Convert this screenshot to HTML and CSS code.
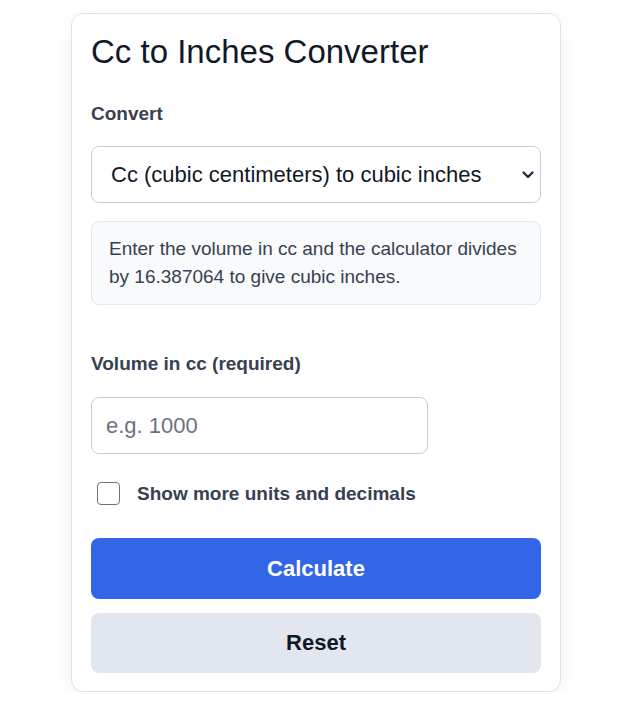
FILE: index.html
```html
<!DOCTYPE html>
<html lang="en">
<head>
    <meta charset="UTF-8">
    <meta name="viewport" content="width=device-width, initial-scale=1.0">
    <title>Cc to Inches Converter</title>
    <link rel="stylesheet" href="styles.css">
</head>
<body>
    <div class="calc-card">
        <h1 class="calc-title">Cc to Inches Converter</h1>

        <form class="calc-form">
            <div class="field">
                <label class="field-label" for="mode">Convert</label>
                <select id="mode" class="select-field">
                    <option>Cc (cubic centimeters) to cubic inches</option>
                    <option>Cubic inches to cc (cubic centimeters)</option>
                </select>
            </div>

            <div class="info-box">
                Enter the volume in cc and the calculator divides by 16.387064 to give cubic inches.
            </div>

            <div class="field field-volume">
                <label class="field-label" for="volume">Volume in cc (required)</label>
                <input type="text" id="volume" class="input-field" placeholder="e.g. 1000">
            </div>

            <label class="check-row">
                <input type="checkbox" class="check-box">
                <span>Show more units and decimals</span>
            </label>

            <button type="button" class="btn btn-primary">Calculate</button>
            <button type="reset" class="btn btn-secondary">Reset</button>
        </form>
    </div>
</body>
</html>
```

FILE: styles.css
```css
* {
    margin: 0;
    padding: 0;
    box-sizing: border-box;
}

body {
    font-family: 'Liberation Sans', Arial, sans-serif;
    background: #ffffff;
    color: #111827;
}

.calc-card {
    width: 490px;
    margin: 13px 0 0 71px;
    padding: 18px 19px 18px;
    background: #ffffff;
    border: 1px solid #dbe3ee;
    border-radius: 12px;
    box-shadow: 0 6px 24px rgba(15, 23, 42, 0.05);
}

.calc-title {
    font-size: 33px;
    font-weight: 400;
    line-height: 40px;
    color: #111827;
    margin-bottom: 31px;
}

.calc-form {
    display: flex;
    flex-direction: column;
}

.field-label {
    display: block;
    font-size: 19px;
    font-weight: 700;
    color: #374151;
    line-height: 22px;
    margin-bottom: 21px;
}

/* custom chevron instead of the native arrow */
.select-field {
    appearance: none;
    width: 100%;
    height: 57px;
    padding: 0 30px 0 19px;
    font-family: inherit;
    font-size: 22px;
    color: #111827;
    background: #ffffff url("data:image/svg+xml,%3Csvg xmlns='http://www.w3.org/2000/svg' width='12' height='8' viewBox='0 0 12 8'%3E%3Cpath d='M1.5 1.5 6 6l4.5-4.5' fill='none' stroke='%231f2937' stroke-width='2.2' stroke-linecap='round' stroke-linejoin='round'/%3E%3C/svg%3E") no-repeat right 6px center;
    border: 1px solid #c3cedb;
    border-radius: 8px;
}

.info-box {
    margin-top: 18px;
    padding: 13px 17px;
    background: #f8fafc;
    border: 1px solid #e2e8f0;
    border-radius: 8px;
    font-size: 19px;
    line-height: 28px;
    color: #374151;
}

.field-volume {
    margin-top: 48px;
}

.field-volume .field-label {
    margin-bottom: 22px;
}

.input-field {
    width: 337px;
    height: 57px;
    padding: 0 14px;
    font-family: inherit;
    font-size: 22px;
    color: #111827;
    border: 1px solid #c3cedb;
    border-radius: 8px;
}

.input-field::placeholder {
    color: #6b7280;
}

.check-row {
    display: flex;
    align-items: center;
    gap: 17px;
    margin: 28px 0 0 6px;
    font-size: 19px;
    font-weight: 700;
    color: #374151;
}

.check-box {
    appearance: none;
    width: 23px;
    height: 23px;
    border: 1.5px solid #6b7280;
    border-radius: 4px;
    background: #ffffff;
}

.btn {
    width: 100%;
    height: 61px;
    border: none;
    border-radius: 8px;
    font-family: inherit;
    font-size: 22px;
    font-weight: 700;
    cursor: pointer;
}

.btn-primary {
    margin-top: 33px;
    background: #3366e6;
    color: #ffffff;
}

.btn-secondary {
    margin-top: 14px;
    height: 60px;
    background: #e2e7ef;
    color: #111827;
}
```
